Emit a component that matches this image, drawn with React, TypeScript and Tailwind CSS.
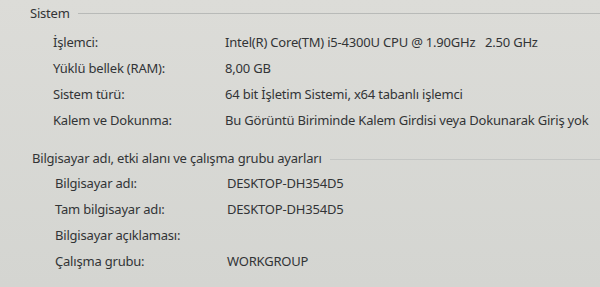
const SYSTEM = [
  ["İşlemci:", "Intel(R) Core(TM) i5-4300U CPU @ 1.90GHz   2.50 GHz"],
  ["Yüklü bellek (RAM):", "8,00 GB"],
  ["Sistem türü:", "64 bit İşletim Sistemi, x64 tabanlı işlemci"],
  ["Kalem ve Dokunma:", "Bu Görüntü Biriminde Kalem Girdisi veya Dokunarak Giriş yok"],
];

const COMPUTER = [
  ["Bilgisayar adı:", "DESKTOP-DH354D5"],
  ["Tam bilgisayar adı:", "DESKTOP-DH354D5"],
  ["Bilgisayar açıklaması:", ""],
  ["Çalışma grubu:", "WORKGROUP"],
];

function Rows({ rows }: { rows: string[][] }) {
  return (
    <div className="flex flex-col pl-[23px]">
      {rows.map(([label, value]) => (
        <div key={label} className="grid grid-cols-[172px_1fr] h-[26px] items-center whitespace-pre">
          <span>{label}</span>
          <span>{value}</span>
        </div>
      ))}
    </div>
  );
}

export default function App() {
  return (
    <div
      className="w-[600px] h-[287px] overflow-hidden bg-gradient-to-b from-[#dcdcd8] to-[#d4d5d1] text-[#323436] text-[13px] tracking-[-0.2px] pl-[30px] pt-[3px]"
      style={{ fontFamily: '"Noto Sans", "Open Sans", sans-serif' }}
    >
      <div className="flex items-center gap-[8px] h-[21px]">
        <span>Sistem</span>
        <div className="flex-1 h-px bg-[#b8bab8]" />
      </div>
      <div className="pt-[6px]">
        <Rows rows={SYSTEM} />
      </div>
      <div className="flex items-center gap-[8px] h-[22px] mt-[14px] pl-[2px]">
        <span>Bilgisayar adı, etki alanı ve çalışma grubu ayarları</span>
        <div className="flex-1 h-px bg-[#c4c6c4]" />
      </div>
      <div className="pt-[1px] pl-[2px]">
        <Rows rows={COMPUTER} />
      </div>
    </div>
  );
}
